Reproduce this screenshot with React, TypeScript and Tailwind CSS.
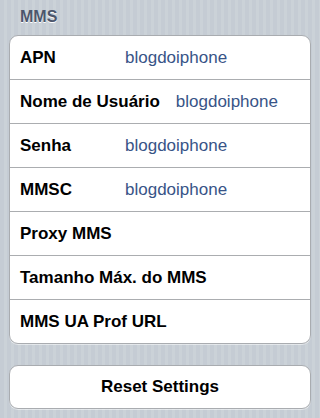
import React from "react";

const rows: { label: string; value?: string }[] = [
  { label: "APN", value: "blogdoiphone" },
  { label: "Nome de Usuário", value: "blogdoiphone" },
  { label: "Senha", value: "blogdoiphone" },
  { label: "MMSC", value: "blogdoiphone" },
  { label: "Proxy MMS" },
  { label: "Tamanho Máx. do MMS" },
  { label: "MMS UA Prof URL" },
];

export default function App() {
  return (
    <div className="w-[320px] h-[418px] overflow-hidden bg-[repeating-linear-gradient(90deg,#c5ccd4_0px,#c5ccd4_4px,#cbd2d8_4px,#cbd2d8_7px)] font-['Liberation_Sans',Arial,sans-serif]">
      <div className="h-[35px] pl-[20px] pt-[8px] text-[16px] leading-[18px] font-bold text-[#4c566c] [text-shadow:0_1px_0_#ffffff]">
        MMS
      </div>
      <div className="mx-[9px] rounded-[9px] border border-[#a9acb0] bg-white overflow-hidden shadow-[0_1px_0_rgba(255,255,255,0.5)]">
        {rows.map((r, i) => (
          <div
            key={r.label}
            className={
              "flex items-center pl-[10px] text-[17px] " +
              (i > 0 ? "h-[44px] border-t border-[#abadb0]" : "h-[43px]")
            }
          >
            <div className="min-w-[105px] pr-[16px] font-bold text-black whitespace-nowrap">
              {r.label}
            </div>
            {r.value && (
              <div className="text-[#385487] whitespace-nowrap">{r.value}</div>
            )}
          </div>
        ))}
      </div>
      <div className="mx-[9px] mt-[21px] h-[44px] rounded-[9px] border border-[#a9acb0] bg-white flex items-center justify-center text-[17px] font-bold text-black shadow-[0_1px_0_rgba(255,255,255,0.5)]">
        Reset Settings
      </div>
    </div>
  );
}
